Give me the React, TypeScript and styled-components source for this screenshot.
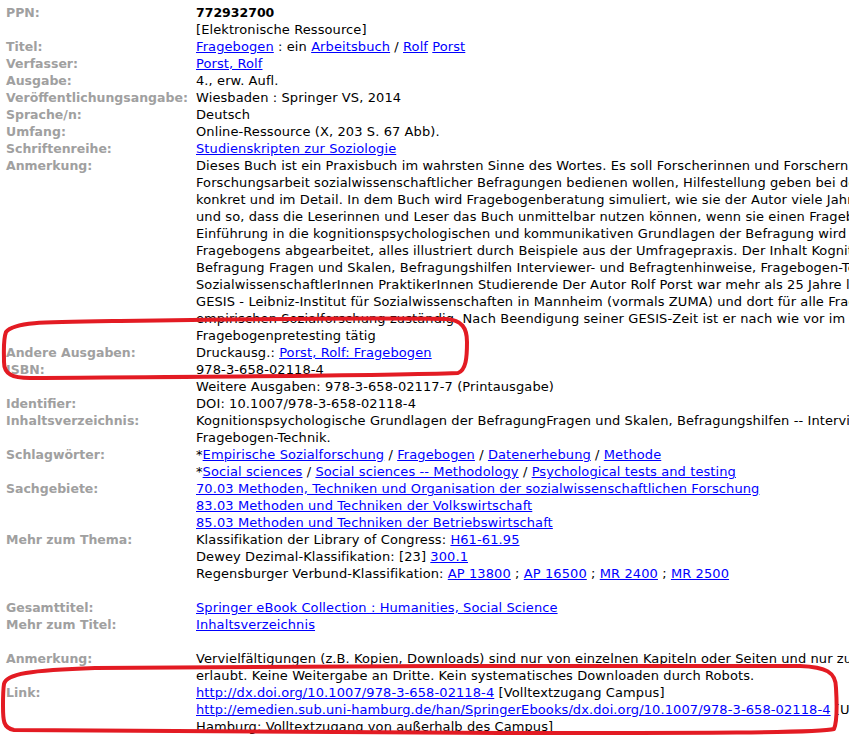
import styled, { createGlobalStyle } from "styled-components";

const GlobalStyle = createGlobalStyle`
    html, body {
        margin: 0;
        padding: 0;
        background: #ffffff;
        overflow: hidden;
    }
    body {
        font-family: "DejaVu Sans", Verdana, sans-serif;
        font-size: 13px;
        color: #000000;
    }
`;

const Page = styled.div`
    position: relative;
    width: 849px;
    height: 746px;
    overflow: hidden;
    padding: 4px 0 0 6px;
    box-sizing: border-box;
`;

const Record = styled.div`
    display: grid;
    grid-template-columns: 190px 1fr;
    line-height: 17px;
`;

const Label = styled.div`
    color: #a0a0a0;
    font-size: 12.5px;
    font-weight: bold;
    white-space: nowrap;
`;

const Value = styled.div`
    white-space: nowrap;
    letter-spacing: 0.1px;
`;

const Line = styled.div<{ $bold?: boolean }>`
    height: 17px;
    font-weight: ${(p) => (p.$bold ? "bold" : "normal")};
    font-size: ${(p) => (p.$bold ? "12.5px" : "13px")};
    letter-spacing: ${(p) => (p.$bold ? "0" : "0.1px")};
`;

const Spacer = styled.div`
    grid-column: 1 / 3;
    height: 17px;
`;

const A = styled.a`
    color: #0000ff;
    text-decoration: underline;
`;

const Marks = styled.svg`
    position: absolute;
    left: 0;
    top: 0;
    pointer-events: none;
`;

type Part = string | { link: string };
type Field = { label: string; lines: Part[][]; bold?: boolean } | "gap";

const L = (t: string) => ({ link: t });

const fields: Field[] = [
    { label: "PPN:", lines: [["772932700"]], bold: true },
    { label: "", lines: [["[Elektronische Ressource]"]] },
    { label: "Titel:", lines: [[L("Fragebogen"), " : ein ", L("Arbeitsbuch"), " / ", L("Rolf"), " ", L("Porst")]] },
    { label: "Verfasser:", lines: [[L("Porst, Rolf")]] },
    { label: "Ausgabe:", lines: [["4., erw. Aufl."]] },
    { label: "Veröffentlichungsangabe:", lines: [["Wiesbaden : Springer VS, 2014"]] },
    { label: "Sprache/n:", lines: [["Deutsch"]] },
    { label: "Umfang:", lines: [["Online-Ressource (X, 203 S. 67 Abb)."]] },
    { label: "Schriftenreihe:", lines: [[L("Studienskripten zur Soziologie")]] },
    {
        label: "Anmerkung:",
        lines: [
            ["Dieses Buch ist ein Praxisbuch im wahrsten Sinne des Wortes. Es soll Forscherinnen und Forschern, die sich"],
            ["Forschungsarbeit sozialwissenschaftlicher Befragungen bedienen wollen, Hilfestellung geben bei der Entwicklung"],
            ["konkret und im Detail. In dem Buch wird Fragebogenberatung simuliert, wie sie der Autor viele Jahre betrieben hat"],
            ["und so, dass die Leserinnen und Leser das Buch unmittelbar nutzen können, wenn sie einen Fragebogen entwickeln"],
            ["Einführung in die kognitionspsychologischen und kommunikativen Grundlagen der Befragung wird ein Katalog"],
            ["Fragebogens abgearbeitet, alles illustriert durch Beispiele aus der Umfragepraxis. Der Inhalt Kognitionspsychologische"],
            ["Befragung Fragen und Skalen, Befragungshilfen Interviewer- und Befragtenhinweise, Fragebogen-Technik Die"],
            ["SozialwissenschaftlerInnen PraktikerInnen Studierende Der Autor Rolf Porst war mehr als 25 Jahre lang bei"],
            ["GESIS - Leibniz-Institut für Sozialwissenschaften in Mannheim (vormals ZUMA) und dort für alle Fragen der"],
            ["empirischen Sozialforschung zuständig. Nach Beendigung seiner GESIS-Zeit ist er nach wie vor im Bereich"],
            ["Fragebogenpretesting tätig"],
        ],
    },
    { label: "Andere Ausgaben:", lines: [["Druckausg.: ", L("Porst, Rolf: Fragebogen")]] },
    { label: "ISBN:", lines: [["978-3-658-02118-4"]] },
    { label: "", lines: [["Weitere Ausgaben: 978-3-658-02117-7 (Printausgabe)"]] },
    { label: "Identifier:", lines: [["DOI: 10.1007/978-3-658-02118-4"]] },
    {
        label: "Inhaltsverzeichnis:",
        lines: [
            ["Kognitionspsychologische Grundlagen der BefragungFragen und Skalen, Befragungshilfen -- Interviewer- und"],
            ["Fragebogen-Technik."],
        ],
    },
    {
        label: "Schlagwörter:",
        lines: [
            ["*", L("Empirische Sozialforschung"), " / ", L("Fragebogen"), " / ", L("Datenerhebung"), " / ", L("Methode")],
            ["*", L("Social sciences"), " / ", L("Social sciences -- Methodology"), " / ", L("Psychological tests and testing")],
        ],
    },
    {
        label: "Sachgebiete:",
        lines: [
            [L("70.03 Methoden, Techniken und Organisation der sozialwissenschaftlichen Forschung")],
            [L("83.03 Methoden und Techniken der Volkswirtschaft")],
            [L("85.03 Methoden und Techniken der Betriebswirtschaft")],
        ],
    },
    {
        label: "Mehr zum Thema:",
        lines: [
            ["Klassifikation der Library of Congress: ", L("H61-61.95")],
            ["Dewey Dezimal-Klassifikation: [23] ", L("300.1")],
            ["Regensburger Verbund-Klassifikation: ", L("AP 13800"), " ; ", L("AP 16500"), " ; ", L("MR 2400"), " ; ", L("MR 2500")],
        ],
    },
    "gap",
    { label: "Gesamttitel:", lines: [[L("Springer eBook Collection : Humanities, Social Science")]] },
    { label: "Mehr zum Titel:", lines: [[L("Inhaltsverzeichnis")]] },
    "gap",
    {
        label: "Anmerkung:",
        lines: [
            ["Vervielfältigungen (z.B. Kopien, Downloads) sind nur von einzelnen Kapiteln oder Seiten und nur zum privaten"],
            ["erlaubt. Keine Weitergabe an Dritte. Kein systematisches Downloaden durch Robots."],
        ],
    },
    {
        label: "Link:",
        lines: [
            [L("http://dx.doi.org/10.1007/978-3-658-02118-4"), " [Volltextzugang Campus]"],
            [L("http://emedien.sub.uni-hamburg.de/han/SpringerEbooks/dx.doi.org/10.1007/978-3-658-02118-4"), " [Universität"],
            ["Hamburg: Volltextzugang von außerhalb des Campus]"],
        ],
    },
];

const renderPart = (p: Part, i: number) =>
    typeof p === "string" ? <span key={i}>{p}</span> : <A key={i} href="#">{p.link}</A>;

export default function App() {
    return (
        <Page>
            <GlobalStyle />
            <Record>
                {fields.map((f, i) =>
                    f === "gap" ? (
                        <Spacer key={i} />
                    ) : (
                        <>
                            <Label key={`l${i}`}>{f.label}</Label>
                            <Value key={`v${i}`}>
                                {f.lines.map((ln, j) => (
                                    <Line key={j} $bold={f.bold}>
                                        {ln.map(renderPart)}
                                    </Line>
                                ))}
                            </Value>
                        </>
                    )
                )}
            </Record>
            <Marks width="849" height="746" viewBox="0 0 849 746">
                <path
                    d="M6 332 C14 322 40 322 120 321 C250 319 380 318 446 319 C462 320 467 328 467 342 C467 358 466 370 458 373 C380 376 160 377 30 378 C12 378 4 374 4 362 C4 350 3 340 6 332 Z"
                    fill="none"
                    stroke="#e31b23"
                    strokeWidth="4"
                    strokeLinejoin="round"
                />
                <path
                    d="M4 684 C6 674 30 670 95 668 C300 666 600 665 800 666 C826 667 836 672 836 688 C837 705 837 722 834 729 C820 733 700 733 500 733 C300 733 100 732 14 730 C3 728 3 720 3 706 C3 696 3 690 4 684 Z"
                    fill="none"
                    stroke="#e31b23"
                    strokeWidth="4"
                    strokeLinejoin="round"
                />
            </Marks>
        </Page>
    );
}
